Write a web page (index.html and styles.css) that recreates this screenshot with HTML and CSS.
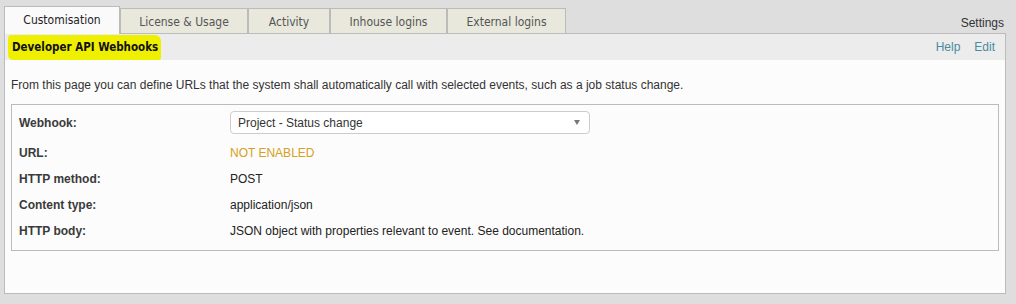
FILE: index.html
```html
<!DOCTYPE html>
<html>
<head>
<meta charset="utf-8">
<link rel="stylesheet" href="styles.css">
</head>
<body>
<div class="page">
  <div class="tabbar">
    <ul class="tabs">
      <li class="tab active t1">Customisation</li>
      <li class="tab t2">License &amp; Usage</li>
      <li class="tab t3">Activity</li>
      <li class="tab t4">Inhouse logins</li>
      <li class="tab t5">External logins</li>
    </ul>
    <span class="settings">Settings</span>
  </div>
  <div class="panel">
    <div class="panel-head">
      <h1 class="title"><span class="hl">Developer API Webhooks</span></h1>
      <nav class="actions"><a class="act">Help</a><a class="act">Edit</a></nav>
    </div>
    <div class="panel-body">
      <p class="intro">From this page you can define URLs that the system shall automatically call with selected events, such as a job status change.</p>
      <div class="box">
        <div class="grid">
          <div class="lbl first">Webhook:</div>
          <div class="val first">
            <div class="select"><span class="sel-text">Project - Status change</span><span class="arrow"></span></div>
          </div>
          <div class="lbl">URL:</div>
          <div class="val warn">NOT ENABLED</div>
          <div class="lbl">HTTP method:</div>
          <div class="val">POST</div>
          <div class="lbl">Content type:</div>
          <div class="val">application/json</div>
          <div class="lbl">HTTP body:</div>
          <div class="val">JSON object with properties relevant to event. See documentation.</div>
        </div>
      </div>
    </div>
  </div>
</div>
</body>
</html>
```

FILE: styles.css
```css
html, body {
  margin: 0;
  padding: 0;
  background: #dedede;
}
body {
  font-family: "Liberation Sans", Arial, sans-serif;
  font-size: 12px;
  color: #333;
}
.page {
  padding: 6px 10px 0 4px;
}
.tabbar {
  display: flex;
  align-items: flex-end;
  justify-content: space-between;
  height: 27px;
  border-bottom: 1px solid #bbb;
}
.tabs {
  display: flex;
  align-items: flex-end;
  list-style: none;
  margin: 0;
  padding: 0;
  height: 27px;
}
.tab {
  box-sizing: border-box;
  height: 25px;
  border: 1px solid #bbb;
  border-bottom: none;
  background: #e8e8dc;
  color: #555;
  font-family: "DejaVu Sans Condensed", "DejaVu Sans", sans-serif;
  font-size: 12px;
  display: flex;
  align-items: center;
  justify-content: center;
  padding-top: 1px;
}
.tab.active {
  height: 28px;
  margin-bottom: -1px;
  background: #fafafa;
  color: #222;
  padding-top: 0;
  padding-bottom: 1px;
}
.t1 { width: 116px; }
.t2 { width: 128px; }
.t3 { width: 82px; }
.t4 { width: 117px; }
.t5 { width: 119px; }
.settings {
  color: #333;
  padding-right: 2px;
  padding-bottom: 3px;
  line-height: 14px;
}
.panel {
  border: 1px solid #bbb;
  border-top: none;
  background: #fcfcfc;
}
.panel-head {
  height: 26px;
  background: #ececec;
  display: flex;
  align-items: center;
  justify-content: space-between;
}
.title {
  margin: 0;
  font-family: "DejaVu Sans Condensed", "DejaVu Sans", sans-serif;
  font-size: 11.5px;
  font-weight: bold;
  color: #111;
  padding-left: 3px;
}
.hl {
  background: #eef000;
  padding: 5px 3px 6px 4px;
  border-radius: 3px 6px 2px 5px;
}
.actions {
  display: flex;
  gap: 14px;
  padding-right: 10px;
}
.act {
  color: #4a8b9c;
  font-size: 12px;
}
.panel-body {
  padding: 18px 6px 42px 6px;
}
.intro {
  margin: 0 0 12px 0;
  line-height: 14px;
  color: #333;
}
.box {
  border: 1px solid #bbb;
  padding: 0 7px 6px 7px;
}
.grid {
  display: grid;
  grid-template-columns: 211px 1fr;
  grid-template-rows: 35px 26px 26px 26px 26px;
  align-items: center;
}
.lbl {
  font-weight: bold;
  color: #3a3a3a;
}
.val {
  color: #222;
}
.warn {
  color: #d6a020;
}
.select {
  box-sizing: border-box;
  width: 360px;
  height: 23px;
  border: 1px solid #ccc;
  border-radius: 4px;
  background: #fff;
  display: flex;
  align-items: center;
  justify-content: space-between;
  padding: 0 9px 0 7px;
}
.sel-text {
  color: #333;
}
.arrow {
  width: 0;
  height: 0;
  border-left: 3.5px solid transparent;
  border-right: 3.5px solid transparent;
  border-top: 5px solid #777;
}
```
